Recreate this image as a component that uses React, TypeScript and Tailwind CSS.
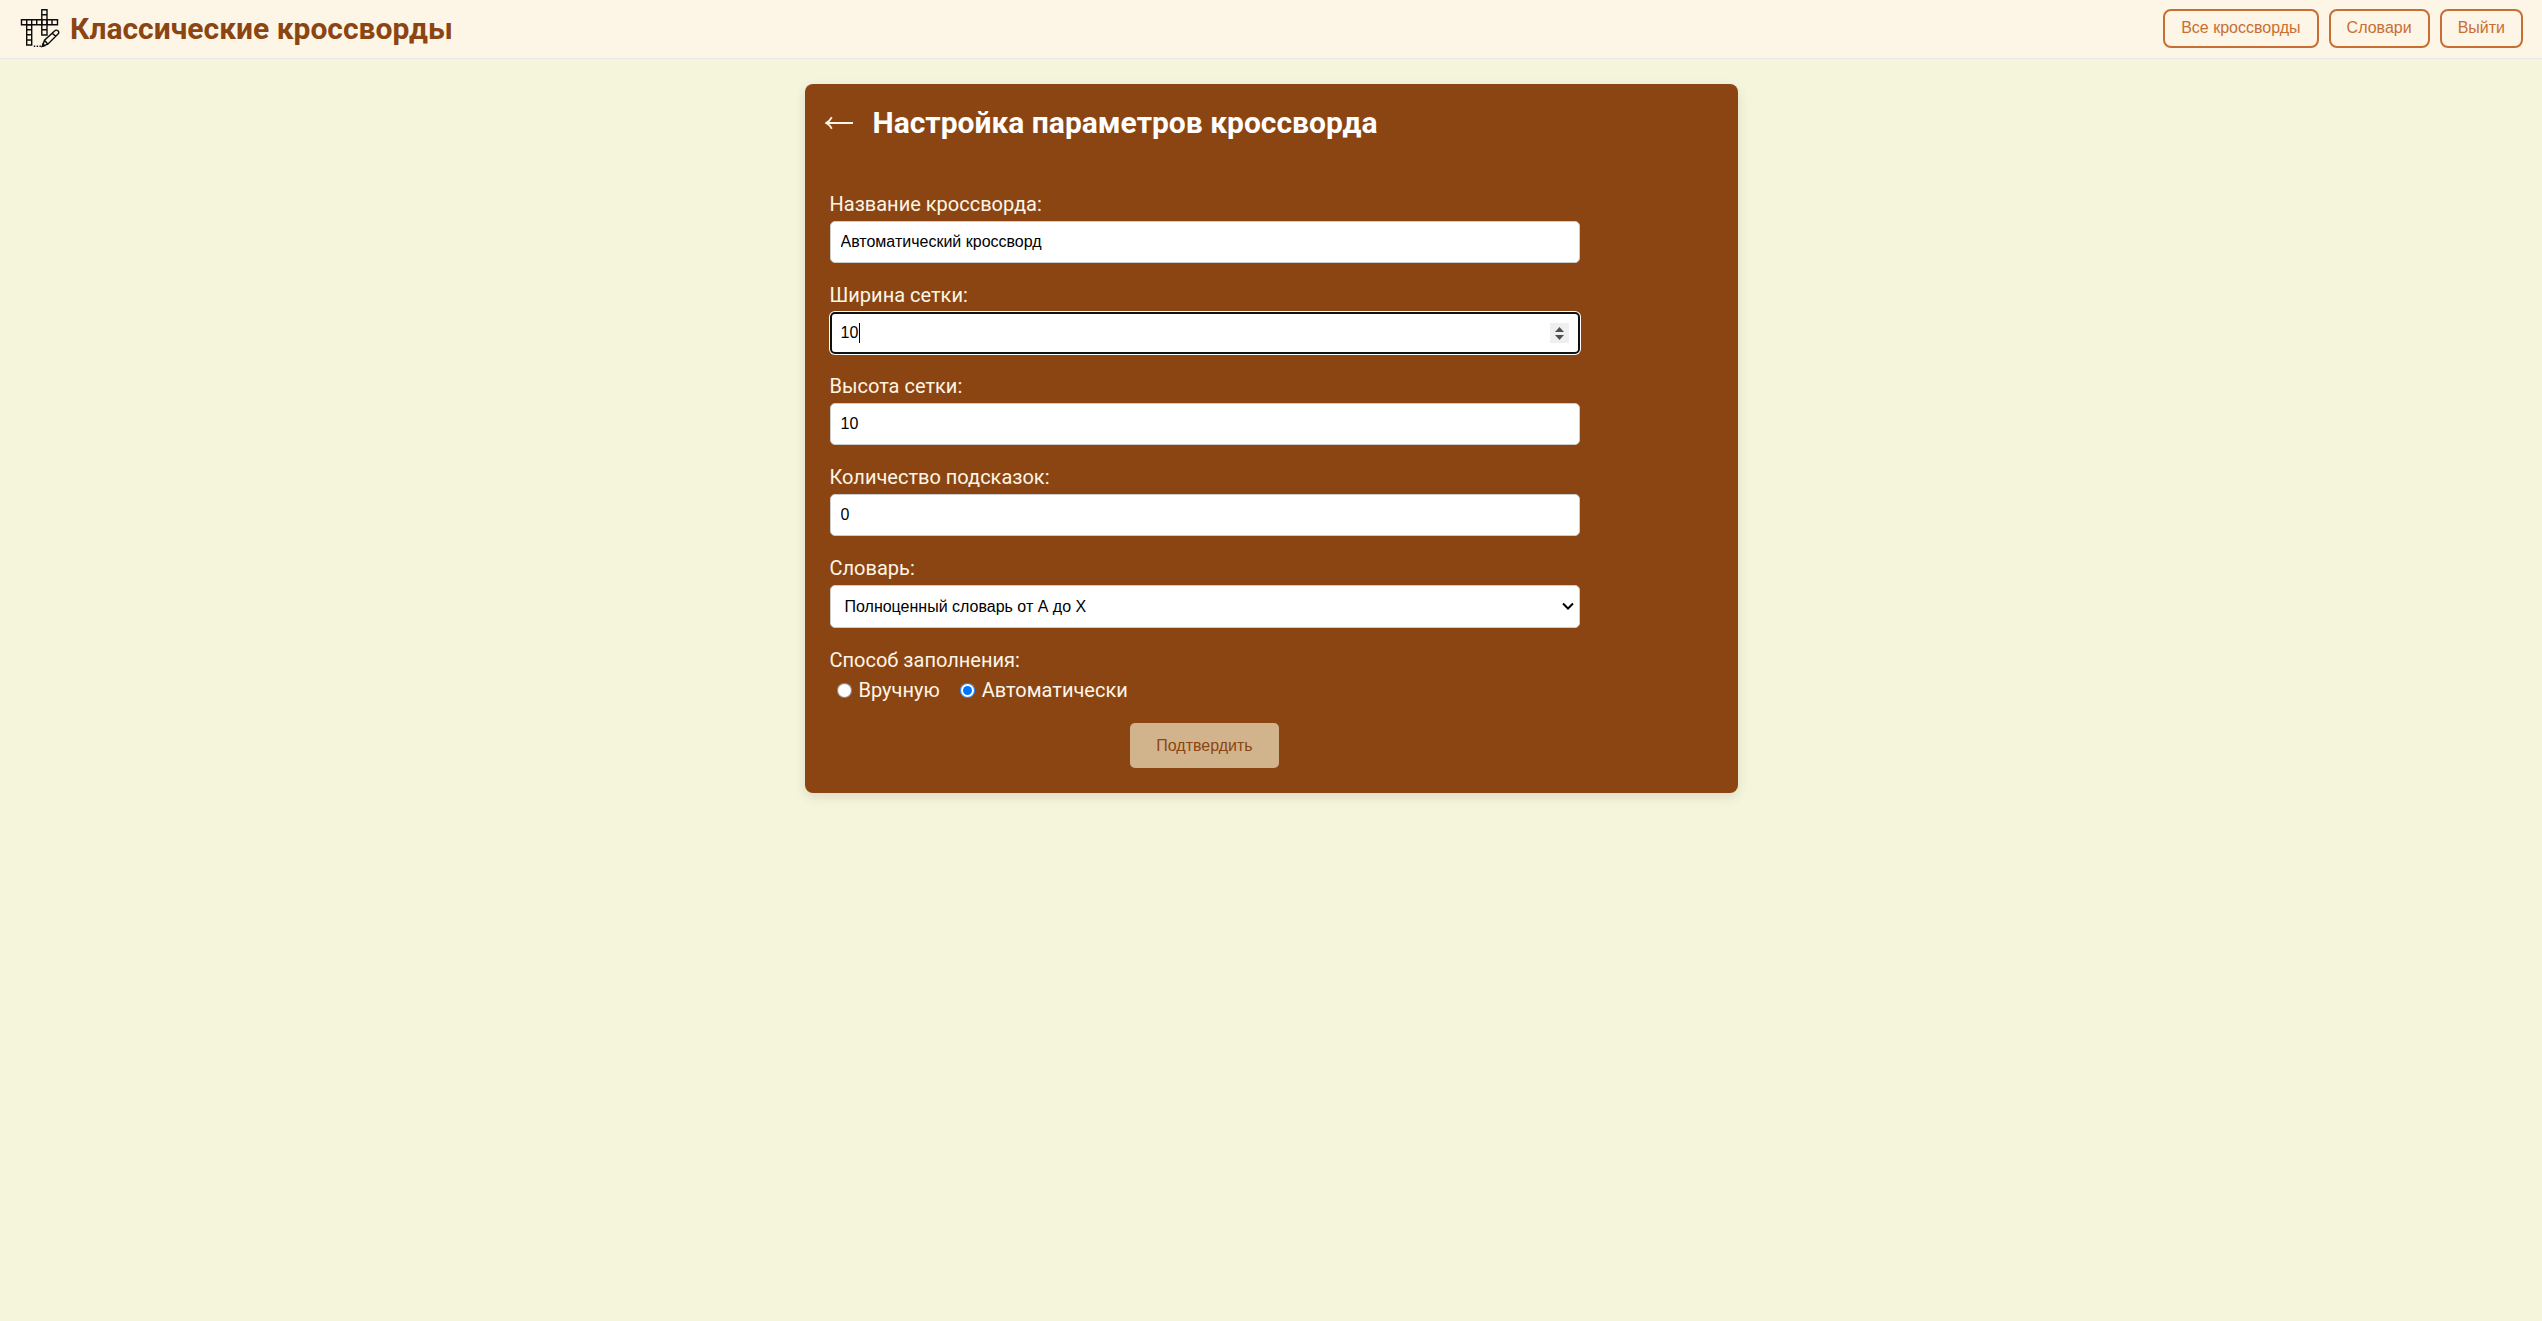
import { useState } from "react";
import type { ReactNode } from "react";

function LogoIcon() {
  return (
    <svg width="40" height="40" viewBox="0 0 40 40" fill="none" stroke="#0c0c0a" strokeWidth="1.4" aria-hidden="true">
      <path d="M1.5 10.800h36v5h-36zM6.700 10.800v5M11.700 10.800v5M16.700 10.800v5M21.800 10.800v5M27 10.800v5M32 10.800v5" />
      <path d="M21.800 .8h5.200v25.200h-5.200zM21.800 5.800h5.200M21.800 20.800h5.200" />
      <path d="M6.700 15.800h5v20.200h-5zM6.700 20.800h5M6.700 25.800h5M6.700 31h5" />
      <path d="M22.500 37.200l2-6L34.600 21.900a2.300 2.300 0 0 1 3.400 3.200L27.800 35.200zM24.500 31.200l3.400 4M32.400 24l3.200 3.400" />
      <path d="M22.200 37.400l.8-2.400 1.600 1.600z" fill="#0c0c0a" />
      <path d="M13.800 37.200h1.400M16.700 37.200h1.400M19.500 37.200h1.400" />
    </svg>
  );
}

function ArrowLeft() {
  return (
    <svg width="28" height="16" viewBox="0 0 28 16" fill="none" stroke="#fdf5e6" strokeWidth="1.8" aria-hidden="true">
      <path d="M1.500 8h26.500M6.800 2.300Q4.500 6.500 1 8Q4.500 9.500 6.800 13.700" />
    </svg>
  );
}

const navItems = ["Все кроссворды", "Словари", "Выйти"];

const fieldClass =
  "block w-full rounded-[5px] bg-white font-['Liberation_Sans',Arial,sans-serif] text-base leading-5 text-black outline-none";
const inputClass = `${fieldClass} h-[42px] border border-[#cccccc] px-2.5`;

function Field({ id, label, children }: { id: string; label: string; children: ReactNode }) {
  return (
    <div className="mb-5">
      <label htmlFor={id} className="mb-1 block text-xl leading-[25px] text-[#fdf5e6]">
        {label}
      </label>
      {children}
    </div>
  );
}

export default function App() {
  const [title, setTitle] = useState("Автоматический кроссворд");
  const [width, setWidth] = useState("10");
  const [height, setHeight] = useState("10");
  const [hints, setHints] = useState("0");
  const [mode, setMode] = useState("auto");

  const stepWidth = (delta: number) => setWidth(String(Number(width) + delta));

  return (
    <div className="min-h-screen bg-[#f5f5dc] font-[Roboto,sans-serif]">
      <header className="flex items-start justify-between border-b border-[#e7e7e7] bg-[#fdf5e6] py-[9px] pr-[19px] pl-5">
        <div className="flex items-start gap-2.5">
          <LogoIcon />
          <h1 className="text-3xl leading-10 font-bold text-[#8b4513]">Классические кроссворды</h1>
        </div>
        <nav className="flex gap-2.5">
          {navItems.map((item) => (
            <button
              key={item}
              type="button"
              className="h-[39px] rounded-lg border-2 border-[#c96e33] px-4 pb-px font-['Liberation_Sans',Arial,sans-serif] text-base text-[#c96e33]"
            >
              {item}
            </button>
          ))}
        </nav>
      </header>

      <main className="mx-auto mt-[25px] max-w-[933px] rounded-lg bg-[#8b4513] px-[25px] pb-[25px] shadow-[0_4px_12px_rgba(0,0,0,0.1)]">
        <div className="-ml-[5px] flex items-center gap-5 pt-[19px]">
          <button type="button" aria-label="Назад" className="flex h-10 items-center">
            <ArrowLeft />
          </button>
          <h2 className="text-3xl leading-10 font-bold text-white">Настройка параметров кроссворда</h2>
        </div>

        <form className="mt-[49px] max-w-[750px]" onSubmit={(e) => e.preventDefault()}>
          <Field id="title" label="Название кроссворда:">
            <input id="title" type="text" value={title} onChange={(e) => setTitle(e.target.value)} className={inputClass} />
          </Field>
          <Field id="width" label="Ширина сетки:">
            <div className="relative">
              <input
                id="width"
                type="number"
                value={width}
                onChange={(e) => setWidth(e.target.value)}
                className={`${fieldClass} h-[42px] border-2 border-[#101010] px-[9px] shadow-[0_0_0_1px_#ffffff] [&::-webkit-inner-spin-button]:appearance-none`}
              />
              <span className="absolute top-[11px] left-[29px] h-5 w-px bg-black" />
              <div className="absolute top-[11px] right-[11px] flex h-5 w-[19px] flex-col bg-[#efefef]">
                <button type="button" aria-label="Увеличить ширину" onClick={() => stepWidth(1)} className="flex flex-1 items-end justify-center pb-px">
                  <svg width="9" height="5" viewBox="0 0 9 5" fill="#505050" aria-hidden="true">
                    <path d="M0 5L4.500 0L9 5z" />
                  </svg>
                </button>
                <button type="button" aria-label="Уменьшить ширину" onClick={() => stepWidth(-1)} className="flex flex-1 items-start justify-center pt-0.5">
                  <svg width="9" height="5" viewBox="0 0 9 5" fill="#505050" aria-hidden="true">
                    <path d="M0 0L4.500 5L9 0z" />
                  </svg>
                </button>
              </div>
            </div>
          </Field>
          <Field id="height" label="Высота сетки:">
            <input id="height" type="number" value={height} onChange={(e) => setHeight(e.target.value)} className={inputClass} />
          </Field>
          <Field id="hints" label="Количество подсказок:">
            <input id="hints" type="number" value={hints} onChange={(e) => setHints(e.target.value)} className={inputClass} />
          </Field>
          <Field id="dictionary" label="Словарь:">
            <div className="relative">
              <select id="dictionary" className={`${fieldClass} h-[43px] appearance-none border border-[#cccccc] pr-8 pl-[14px]`}>
                <option>Полноценный словарь от А до Х</option>
              </select>
              <svg
                className="pointer-events-none absolute top-[17px] right-1.5"
                width="12"
                height="9"
                viewBox="0 0 12 9"
                fill="none"
                stroke="#000000"
                strokeWidth="2"
                aria-hidden="true"
              >
                <path d="M1 1.500L6 6.500L11 1.500" />
              </svg>
            </div>
          </Field>

          <fieldset className="text-xl leading-[25px] text-[#fdf5e6]">
            <legend className="mb-[5px]">Способ заполнения:</legend>
            <div className="flex gap-5">
              <label className="flex items-center gap-[7px]">
                <input type="radio" name="mode" checked={mode === "manual"} onChange={() => setMode("manual")} className="ml-[7px] size-[15px]" />
                Вручную
              </label>
              <label className="flex items-center gap-[7px]">
                <input type="radio" name="mode" checked={mode === "auto"} onChange={() => setMode("auto")} className="size-[15px]" />
                Автоматически
              </label>
            </div>
          </fieldset>

          <button
            type="submit"
            className="mx-auto mt-5 block h-[45px] rounded-[5px] bg-[#d2b48c] px-[26px] font-['Liberation_Sans',Arial,sans-serif] text-base text-[#8b4513]"
          >
            Подтвердить
          </button>
        </form>
      </main>
    </div>
  );
}
